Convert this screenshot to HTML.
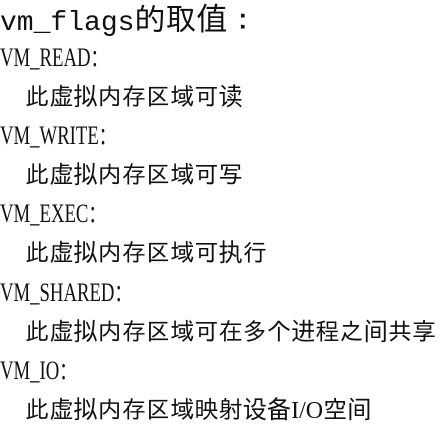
<!DOCTYPE html>
<html><head><meta charset="utf-8"><style>
html,body{margin:0;padding:0;background:#fff;width:445px;height:428px;overflow:hidden;position:relative;color:#111;}
.t{position:absolute;left:0;top:2px;white-space:nowrap;line-height:34px;}
.m{font-family:"Liberation Mono",monospace;font-size:28px;}
.c{font-family:"WenQuanYi Zen Hei","IPAGothic",sans-serif;font-size:31px;}
.k{position:absolute;left:0;font-family:"Liberation Serif",serif;font-size:26px;line-height:26px;white-space:nowrap;transform:scaleX(0.72);transform-origin:0 0;}
.k span{font-family:"WenQuanYi Zen Hei",sans-serif;font-size:24px;}
.z{position:absolute;left:25px;font-family:"WenQuanYi Zen Hei","IPAGothic",sans-serif;font-size:24.2px;line-height:24px;white-space:nowrap;}
.z b{font-family:"Liberation Serif",serif;font-weight:normal;font-size:24px;}
</style></head><body>
<div class="t"><span class="m">vm_flags</span><span class="c">的取值：</span></div>
<div class="k" style="top:45px">VM_READ<span>：</span></div>
<div class="z" style="top:84px">此虚拟内存区域可读</div>
<div class="k" style="top:123px">VM_WRITE<span>：</span></div>
<div class="z" style="top:162px">此虚拟内存区域可写</div>
<div class="k" style="top:201px">VM_EXEC<span>：</span></div>
<div class="z" style="top:240px">此虚拟内存区域可执行</div>
<div class="k" style="top:280px">VM_SHARED<span>：</span></div>
<div class="z" style="top:319px">此虚拟内存区域可在多个进程之间共享</div>
<div class="k" style="top:358px">VM_IO<span>：</span></div>
<div class="z" style="top:397px">此虚拟内存区域映射设备<b>I/O</b>空间</div>
</body></html>
